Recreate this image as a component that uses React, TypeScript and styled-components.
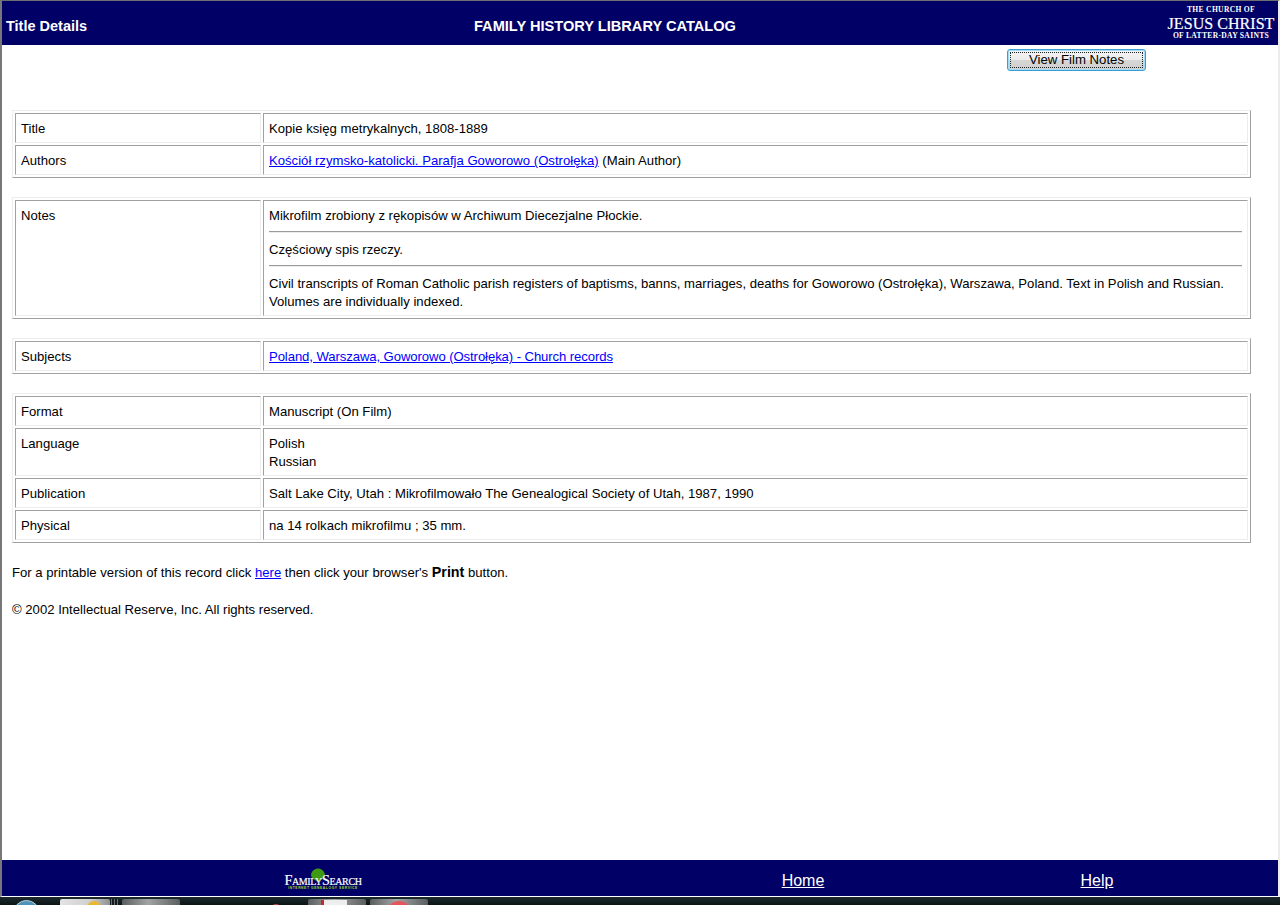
import styled, { createGlobalStyle } from "styled-components";

const GlobalStyle = createGlobalStyle`
    html, body {
        margin: 0;
        padding: 0;
        background: #fff;
    }
    body {
        font-family: "Liberation Sans", Arial, sans-serif;
        font-size: 13.13px;
        line-height: 18px;
        color: #000;
    }
`;

const Page = styled.div`
    width: 1280px;
    height: 905px;
    display: flex;
    flex-direction: column;
    overflow: hidden;
`;

const BrowserWindow = styled.div`
    flex: 1;
    min-height: 0;
    display: flex;
    flex-direction: column;
    border-top: 1px solid #6e6e6e;
    border-left: 2px solid #777;
    border-right: 2px solid #ececec;
    border-bottom: 1px solid #fff;
`;

const Header = styled.header`
    height: 44px;
    flex-shrink: 0;
    background: #000066;
    color: #fff;
    display: grid;
    grid-template-columns: 472px 264px 1fr;
    align-items: center;
`;

const PageName = styled.h1`
    margin: 0;
    padding: 5px 0 0 4px;
    font-size: 14.5px;
    font-weight: 700;
`;

const CatalogName = styled.h2`
    margin: 0;
    padding-top: 5px;
    font-size: 14.6px;
    font-weight: 700;
    white-space: nowrap;
`;

const ChurchLogo = styled.div`
    justify-self: end;
    padding: 0 4px 2px 0;
    width: 106px;
    display: flex;
    flex-direction: column;
    align-items: center;
    font-family: "Liberation Serif", "Times New Roman", serif;
    font-weight: 700;
    white-space: nowrap;
`;

const LogoSmall = styled.span`
    font-size: 7.6px;
    line-height: 9px;
    letter-spacing: 0.3px;
`;

const LogoBig = styled.span`
    margin: 2px 0 -1px;
    font-size: 16px;
    line-height: 16px;
    font-weight: 400;
    letter-spacing: 0.05px;
    -webkit-text-stroke: 0.2px #fff;
`;

const Main = styled.main`
    flex: 1;
    min-height: 0;
    padding-left: 10px;
`;

const ButtonRow = styled.div`
    height: 65px;
    display: flex;
    justify-content: flex-end;
    align-items: flex-start;
    padding: 4px 132px 0 0;
    box-sizing: border-box;
`;

const FilmNotesButton = styled.button`
    width: 139px;
    height: 22px;
    padding: 2px;
    border: 1px solid #3a9ccf;
    border-radius: 3px;
    background: linear-gradient(#f4f4f4 0%, #ececec 48%, #d6d6d6 52%, #cfcfcf 100%);
    box-shadow: inset 0 0 0 1px #9fdcf5;
    font-family: "Liberation Sans", Arial, sans-serif;
    font-size: 13.2px;
    color: #000;
`;

const FocusRing = styled.span`
    display: block;
    height: 16px;
    line-height: 13px;
    box-sizing: border-box;
    border: 1px dotted #222;
`;

const RecordTable = styled.table`
    width: 1239px;
    table-layout: fixed;
    border-collapse: separate;
    border-spacing: 2px;
    border-style: solid;
    border-width: 1px;
    border-color: #ededed #a0a0a0 #a0a0a0 #ededed;
    margin-bottom: 19px;
`;

const LabelCell = styled.td`
    width: 246px;
    box-sizing: border-box;
    padding: 6px 5px 4px;
    vertical-align: top;
    border-style: solid;
    border-width: 1px;
    border-color: #a0a0a0 #ededed #ededed #a0a0a0;
`;

const ValueCell = styled(LabelCell)`
    width: auto;
`;

const NoteRule = styled.hr`
    margin: 6px 0 8px;
    height: 0;
    border: 0;
    border-top: 1px solid #9a9a9a;
    border-bottom: 1px solid #ededed;
`;

const RecordLink = styled.a<{ $tight?: boolean }>`
    color: #0000ff;
    text-decoration: underline;
    letter-spacing: ${(p) => (p.$tight ? "-0.09px" : "normal")};
`;

const Remark = styled.p`
    margin: 0 0 18px;
    padding-top: 1px;
`;

const PrintWord = styled.b`
    font-size: 14.3px;
`;

const Footer = styled.footer`
    height: 36px;
    flex-shrink: 0;
    background: #000066;
    display: grid;
    grid-template-columns: 642px 318px 270px;
    align-items: center;
    justify-items: center;
`;

const FooterLink = styled.a`
    color: #fff;
    font-size: 16px;
    padding-top: 5px;
    text-decoration: underline;
`;

const SearchLogo = styled.div`
    position: relative;
    width: 80px;
    height: 22px;
    margin-top: 2px;
    display: flex;
    flex-direction: column;
    align-items: center;
    justify-content: flex-end;
    color: #fff;
    white-space: nowrap;
`;

const LogoTree = styled.svg`
    position: absolute;
    left: 27px;
    top: 0;
`;

const SearchName = styled.span`
    position: relative;
    font-family: "Liberation Serif", "Times New Roman", serif;
    font-size: 14.2px;
    line-height: 12px;
    font-variant: small-caps;
    letter-spacing: -0.35px;
    -webkit-text-stroke: 0.2px #fff;
`;

const SearchTagline = styled.span`
    font-family: "Liberation Sans", Arial, sans-serif;
    font-size: 3.4px;
    line-height: 4px;
    font-weight: 700;
    letter-spacing: 0.55px;
    color: #a6dc28;
`;

const Taskbar = styled.div`
    height: 8px;
    flex-shrink: 0;
    background: linear-gradient(#1c2a2e, #0c1416);
    display: flex;
    align-items: flex-start;
    padding-top: 2px;
    box-sizing: border-box;
    overflow: hidden;
`;

const StartOrb = styled.div`
    width: 27px;
    height: 27px;
    margin: 1px 0 0 13px;
    flex-shrink: 0;
    border-radius: 50%;
    border: 1px solid #b7d3e0;
    box-sizing: border-box;
    background: #4f93b8;
`;

const TaskButton = styled.div<{ $w: number; $ml: number; $light?: boolean }>`
    width: ${(p) => p.$w}px;
    margin-left: ${(p) => p.$ml}px;
    height: 12px;
    flex-shrink: 0;
    border-radius: 2px 2px 0 0;
    background: ${(p) =>
        p.$light
            ? "linear-gradient(90deg, #e4e4e4, #cfcfcf 60%, #8f9090)"
            : "linear-gradient(90deg, #5b5e5f, #a2a4a4 45%, #5b5e5f)"};
    display: flex;
    justify-content: center;
`;

const TaskIcon = styled.span<{ $color: string; $w: number; $shift: number }>`
    width: ${(p) => p.$w}px;
    height: 14px;
    margin: 2px 0 0 ${(p) => p.$shift}px;
    background: ${(p) => p.$color};
    border-radius: 50% 50% 0 0;
`;

const SquareIcon = styled.span`
    width: 26px;
    height: 14px;
    margin: 1px 6px 0 0;
    background: #eeeeee;
    border-left: 3px solid #c9262e;
    box-sizing: border-box;
`;

const Grip = styled.span`
    width: 7px;
    height: 8px;
    margin-left: 1px;
    flex-shrink: 0;
    background: repeating-linear-gradient(90deg, #6a6d6e 0 1px, #14191b 1px 3px);
`;

const TrayGlow = styled.span`
    width: 12px;
    height: 12px;
    margin: 5px 0 0 90px;
    flex-shrink: 0;
    border-radius: 50%;
    background: #c9443c;
`;

const App = () => {
    return (
        <Page>
            <GlobalStyle />
            <BrowserWindow>
                <Header>
                    <PageName>Title Details</PageName>
                    <CatalogName>FAMILY HISTORY LIBRARY CATALOG</CatalogName>
                    <ChurchLogo>
                        <LogoSmall>THE CHURCH OF</LogoSmall>
                        <LogoBig>JESUS CHRIST</LogoBig>
                        <LogoSmall>OF LATTER-DAY SAINTS</LogoSmall>
                    </ChurchLogo>
                </Header>

                <Main>
                    <ButtonRow>
                        <FilmNotesButton>
                            <FocusRing>View Film Notes</FocusRing>
                        </FilmNotesButton>
                    </ButtonRow>

                    <RecordTable>
                        <tbody>
                            <tr>
                                <LabelCell>Title</LabelCell>
                                <ValueCell>Kopie księg metrykalnych, 1808-1889</ValueCell>
                            </tr>
                            <tr>
                                <LabelCell>Authors</LabelCell>
                                <ValueCell>
                                    <RecordLink href="#">Kościół rzymsko-katolicki. Parafja Goworowo (Ostrołęka)</RecordLink> (Main Author)
                                </ValueCell>
                            </tr>
                        </tbody>
                    </RecordTable>

                    <RecordTable>
                        <tbody>
                            <tr>
                                <LabelCell>Notes</LabelCell>
                                <ValueCell>
                                    Mikrofilm zrobiony z rękopisów w Archiwum Diecezjalne Płockie.
                                    <NoteRule />
                                    Częściowy spis rzeczy.
                                    <NoteRule />
                                    Civil transcripts of Roman Catholic parish registers of baptisms, banns, marriages, deaths for Goworowo (Ostrołęka), Warszawa, Poland. Text in Polish and Russian. Volumes are individually indexed.
                                </ValueCell>
                            </tr>
                        </tbody>
                    </RecordTable>

                    <RecordTable>
                        <tbody>
                            <tr>
                                <LabelCell>Subjects</LabelCell>
                                <ValueCell>
                                    <RecordLink href="#" $tight>Poland, Warszawa, Goworowo (Ostrołęka) - Church records</RecordLink>
                                </ValueCell>
                            </tr>
                        </tbody>
                    </RecordTable>

                    <RecordTable>
                        <tbody>
                            <tr>
                                <LabelCell>Format</LabelCell>
                                <ValueCell>Manuscript (On Film)</ValueCell>
                            </tr>
                            <tr>
                                <LabelCell>Language</LabelCell>
                                <ValueCell>
                                    Polish
                                    <br />
                                    Russian
                                </ValueCell>
                            </tr>
                            <tr>
                                <LabelCell>Publication</LabelCell>
                                <ValueCell>Salt Lake City, Utah : Mikrofilmowało The Genealogical Society of Utah, 1987, 1990</ValueCell>
                            </tr>
                            <tr>
                                <LabelCell>Physical</LabelCell>
                                <ValueCell>na 14 rolkach mikrofilmu ; 35 mm.</ValueCell>
                            </tr>
                        </tbody>
                    </RecordTable>

                    <Remark>
                        For a printable version of this record click <RecordLink href="#">here</RecordLink> then click your browser's <PrintWord>Print</PrintWord> button.
                    </Remark>
                    <Remark>© 2002 Intellectual Reserve, Inc. All rights reserved.</Remark>
                </Main>

                <Footer>
                    <SearchLogo>
                        <LogoTree width="16" height="16" viewBox="0 0 16 16">
                            <path d="M8 15 C7 12 3 12 1.5 9 C0 5 3 1 8 0.5 C13 1 16 5 14.5 9 C13 12 9 12 8 15Z" fill="#3f9a12" />
                        </LogoTree>
                        <SearchName>FamilySearch</SearchName>
                        <SearchTagline>INTERNET GENEALOGY SERVICE</SearchTagline>
                    </SearchLogo>
                    <FooterLink href="#">Home</FooterLink>
                    <FooterLink href="#">Help</FooterLink>
                </Footer>
            </BrowserWindow>

            <Taskbar>
                <StartOrb />
                <TaskButton $w={50} $ml={20} $light>
                    <TaskIcon $color="#e8b92e" $w={14} $shift={18} />
                </TaskButton>
                <Grip />
                <TaskButton $w={58} $ml={4} />
                <TrayGlow />
                <TaskButton $w={58} $ml={26}>
                    <SquareIcon />
                </TaskButton>
                <TaskButton $w={58} $ml={4}>
                    <TaskIcon $color="#e2565e" $w={20} $shift={0} />
                </TaskButton>
            </Taskbar>
        </Page>
    );
};

export default App;
